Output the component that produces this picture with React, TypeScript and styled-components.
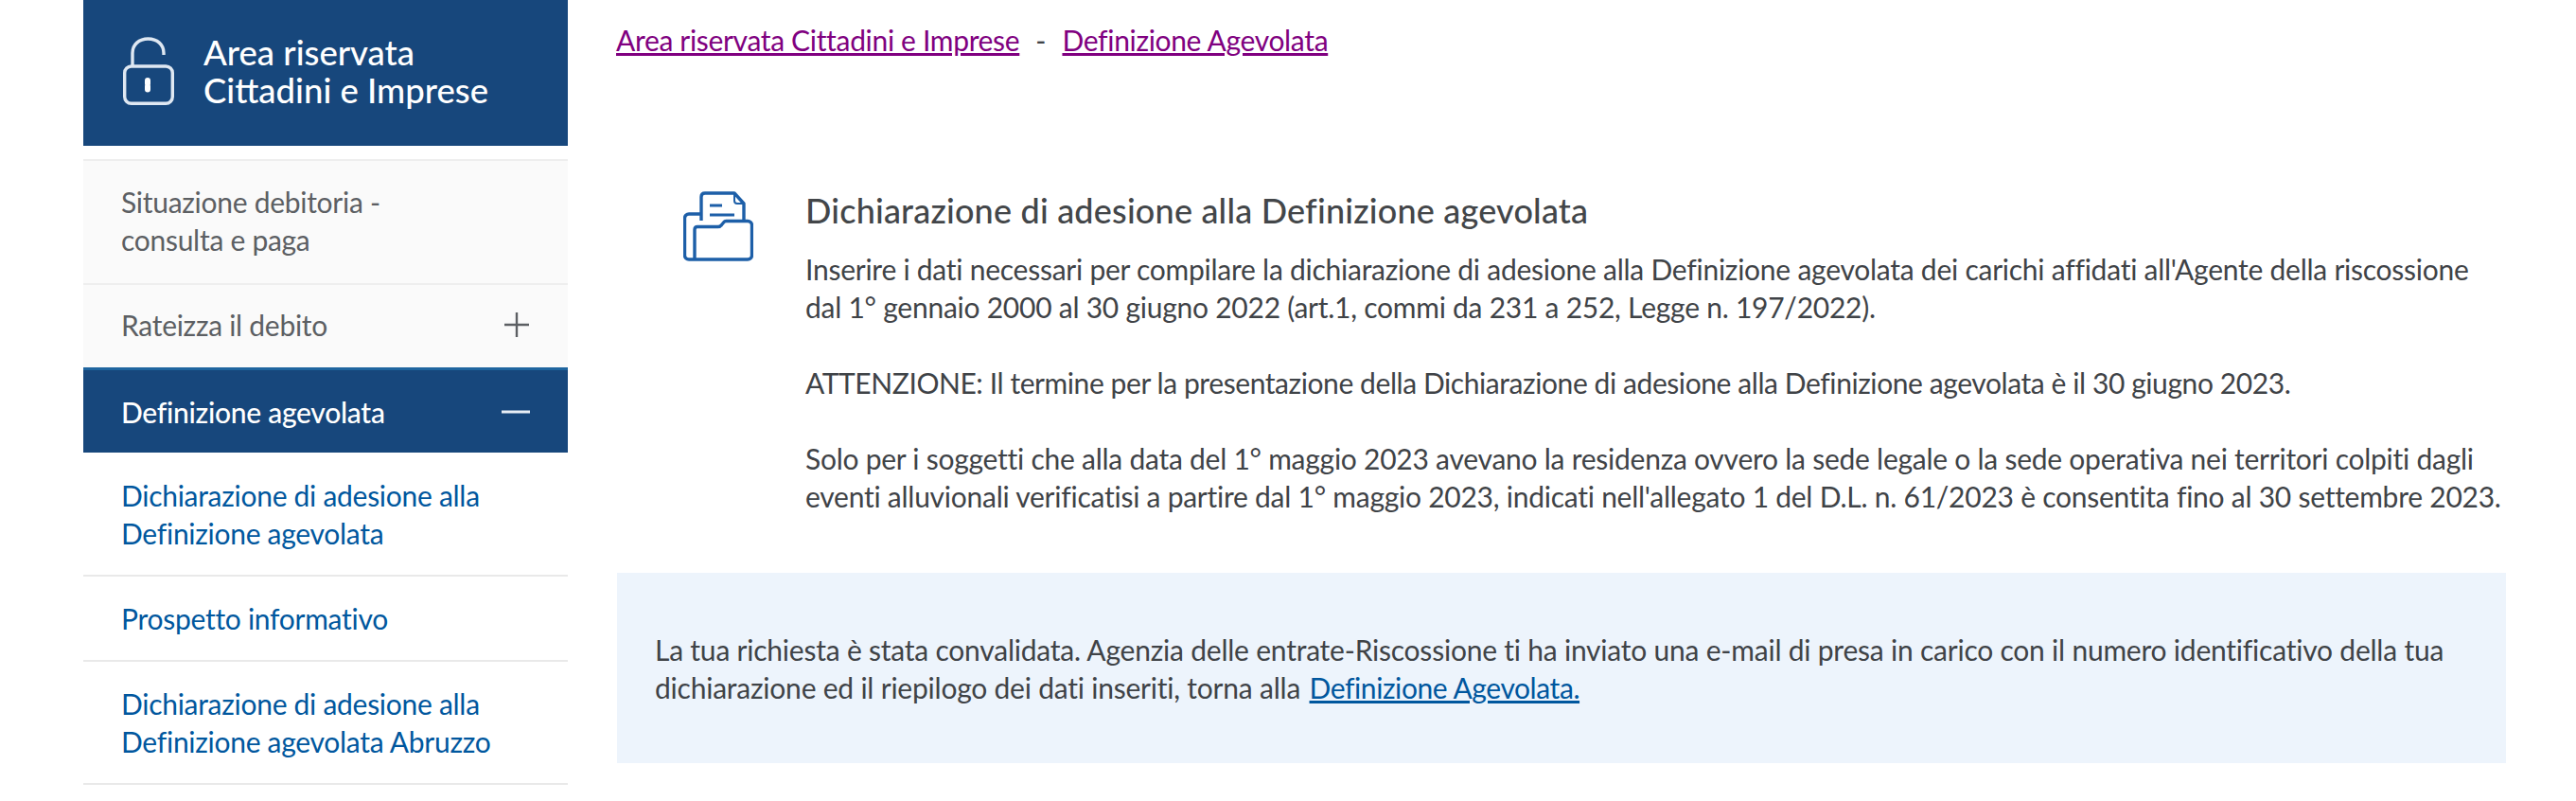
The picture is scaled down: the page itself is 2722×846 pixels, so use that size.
import styled, { createGlobalStyle } from "styled-components";

const GlobalStyle = createGlobalStyle`
  html, body {
    margin: 0;
    padding: 0;
    background: #fff;
    overflow: hidden;
    font-family: Lato, "Liberation Sans", sans-serif;
  }
`;

const Page = styled.div`
  display: flex;
  align-items: flex-start;
  gap: 52px;
  width: 2722px;
  height: 846px;
  padding-left: 88px;
  box-sizing: border-box;
  overflow: hidden;
`;

const Sidebar = styled.aside`
  flex: 0 0 512px;
  display: flex;
  flex-direction: column;
`;

const SideHeader = styled.div`
  height: 154px;
  box-sizing: border-box;
  padding: 0 0 5px 42px;
  background: #17477c;
  display: flex;
  align-items: center;
  gap: 31px;
  margin-bottom: 14px;
  color: #fff;
`;

const SideTitle = styled.div`
  font-size: 36.5px;
  line-height: 40px;
  font-weight: 500;
  letter-spacing: 0;
  white-space: nowrap;
`;

const Menu = styled.ul`
  list-style: none;
  margin: 0;
  padding: 0;
`;

const MenuItem = styled.li<{ $kind: "muted" | "active" | "link"; $height: number }>`
  height: ${(p) => p.$height}px;
  box-sizing: border-box;
  display: flex;
  align-items: center;
  justify-content: space-between;
  padding: 0 40px ${(p) => (p.$kind === "muted" ? 3 : 0)}px 40px;
  font-size: 30px;
  line-height: 40px;
  white-space: nowrap;
  letter-spacing: -0.28px;
  background: ${(p) => (p.$kind === "muted" ? "#fafafa" : p.$kind === "active" ? "#17477c" : "#fff")};
  color: ${(p) => (p.$kind === "muted" ? "#5c5f63" : p.$kind === "active" ? "#fff" : "#00579e")};
  font-weight: ${(p) => (p.$kind === "active" ? 500 : 400)};
  border-top: ${(p) => (p.$kind === "active" ? "3px solid #1f659f" : p.$kind === "muted" ? "2px solid #eeeeee" : "0")};
  border-bottom: ${(p) => (p.$kind === "link" ? "2px solid #e9e9e9" : "0")};
`;

const Main = styled.main`
  flex: 0 0 1996px;
  min-width: 0;
  display: flex;
  flex-direction: column;
  color: #3f4347;
`;

const Breadcrumb = styled.nav`
  display: flex;
  align-items: center;
  gap: 17px;
  height: 40px;
  margin: 22px 0 0 -1px;
  font-size: 30px;
  line-height: 40px;
  white-space: nowrap;
`;

const CrumbLink = styled.a`
  color: #800080;
  text-decoration: underline;
  letter-spacing: -0.33px;
`;

const Intro = styled.section`
  display: flex;
  align-items: flex-start;
  margin-top: 140px;
  padding-left: 70px;
`;

const IconSlot = styled.div`
  flex: 0 0 129px;
`;

const IntroBody = styled.div`
  font-size: 30px;
  line-height: 40px;
  white-space: nowrap;
`;

const IntroTitle = styled.h1`
  margin: 0 0 22px;
  font-size: 36px;
  line-height: 40px;
  font-weight: 500;
  letter-spacing: 0.2px;
  color: #434649;
`;

const Paragraph = styled.p<{ $tracking?: number }>`
  margin: 0 0 40px;
  letter-spacing: ${(p) => p.$tracking ?? -0.25}px;

  &:last-child {
    margin-bottom: 0;
  }
`;

const Notice = styled.section`
  margin-top: 61px;
  height: 201px;
  box-sizing: border-box;
  padding: 61px 40px 0;
  background: #edf4fc;
  font-size: 30px;
  line-height: 40px;
  white-space: nowrap;
  letter-spacing: -0.22px;
`;

const NoticeLink = styled.a`
  color: #00579e;
  text-decoration: underline;
  margin-left: 2px;
  letter-spacing: -0.42px;
`;

const Toggle = () => (
  <svg width="28" height="28" viewBox="0 0 28 28" fill="none" stroke="#5c5f63" strokeWidth="2.4">
    <path d="M1 14h26M14 1v26" />
  </svg>
);

const Collapse = () => (
  <svg width="30" height="4" viewBox="0 0 30 4" fill="none" stroke="#e8eef5" strokeWidth="3">
    <path d="M0 2h30" />
  </svg>
);

const LockIcon = () => (
  <svg width="54" height="72" viewBox="0 0 54 72" fill="none" stroke="#dfe8f2" strokeWidth="3.4">
    <path d="M10 31V17C10 8 17 2 26.500 2S43 8 43 17v2" />
    <rect x="1.7" y="31" width="50.600" height="39.300" rx="7" />
    <path d="M26 46v11" stroke="#fff" strokeWidth="6" strokeLinecap="round" strokeDasharray="3.5 2.5" />
  </svg>
);

const FolderIcon = () => (
  <svg width="74" height="74" viewBox="0 0 74 74" fill="none" stroke="#1d5fa8" strokeWidth="3.4" strokeLinejoin="round">
    <path d="M19 31V6c0-2.500 1.500-4 4-4h31l10 11v17" />
    <path d="M54 2v8c0 2 1 3 3 3h7" strokeWidth="2" />
    <path d="M28 15h13M28 25h26" strokeWidth="3" />
    <path d="M19 24H6c-2.500 0-4.500 2-4.500 4.500v39C1.500 70 3.500 72 6 72h62c2.500 0 4.500-2 4.500-4.500V36c0-2.500-2-4.500-4.500-4.500H47c-2 0-3-.5-4 1l-2.500 3c-1 1.500-2 2-4 2H15c-2 0-3 1-3 3v31" />
  </svg>
);

const App = () => {
  return (
    <>
      <GlobalStyle />
      <Page>
        <Sidebar>
          <SideHeader>
            <LockIcon />
            <SideTitle>
              Area riservata
              <br />
              Cittadini e Imprese
            </SideTitle>
          </SideHeader>
          <Menu>
            <MenuItem $kind="muted" $height={131}>
              <span>
                Situazione debitoria -
                <br />
                consulta e paga
              </span>
            </MenuItem>
            <MenuItem $kind="muted" $height={89}>
              <span>Rateizza il debito</span>
              <Toggle />
            </MenuItem>
            <MenuItem $kind="active" $height={90}>
              <span>Definizione agevolata</span>
              <Collapse />
            </MenuItem>
            <MenuItem $kind="link" $height={131}>
              <span>
                Dichiarazione di adesione alla
                <br />
                Definizione agevolata
              </span>
            </MenuItem>
            <MenuItem $kind="link" $height={90}>
              <span>Prospetto informativo</span>
            </MenuItem>
            <MenuItem $kind="link" $height={130}>
              <span>
                Dichiarazione di adesione alla
                <br />
                Definizione agevolata Abruzzo
              </span>
            </MenuItem>
          </Menu>
        </Sidebar>
        <Main>
          <Breadcrumb>
            <CrumbLink href="#">Area riservata Cittadini e Imprese</CrumbLink>
            <span>-</span>
            <CrumbLink href="#">Definizione Agevolata</CrumbLink>
          </Breadcrumb>
          <Intro>
            <IconSlot>
              <FolderIcon />
            </IconSlot>
            <IntroBody>
              <IntroTitle>Dichiarazione di adesione alla Definizione agevolata</IntroTitle>
              <Paragraph>
                Inserire i dati necessari per compilare la dichiarazione di adesione alla Definizione agevolata dei carichi affidati all'Agente della riscossione
                <br />
                dal 1° gennaio 2000 al 30 giugno 2022 (art.1, commi da 231 a 252, Legge n. 197/2022).
              </Paragraph>
              <Paragraph $tracking={-0.42}>
                ATTENZIONE: Il termine per la presentazione della Dichiarazione di adesione alla Definizione agevolata è il 30 giugno 2023.
              </Paragraph>
              <Paragraph>
                Solo per i soggetti che alla data del 1° maggio 2023 avevano la residenza ovvero la sede legale o la sede operativa nei territori colpiti dagli
                <br />
                eventi alluvionali verificatisi a partire dal 1° maggio 2023, indicati nell'allegato 1 del D.L. n. 61/2023 è consentita fino al 30 settembre 2023.
              </Paragraph>
            </IntroBody>
          </Intro>
          <Notice>
            La tua richiesta è stata convalidata. Agenzia delle entrate-Riscossione ti ha inviato una e-mail di presa in carico con il numero identificativo della tua
            <br />
            dichiarazione ed il riepilogo dei dati inseriti, torna alla <NoticeLink href="#">Definizione Agevolata.</NoticeLink>
          </Notice>
        </Main>
      </Page>
    </>
  );
};

export default App;
